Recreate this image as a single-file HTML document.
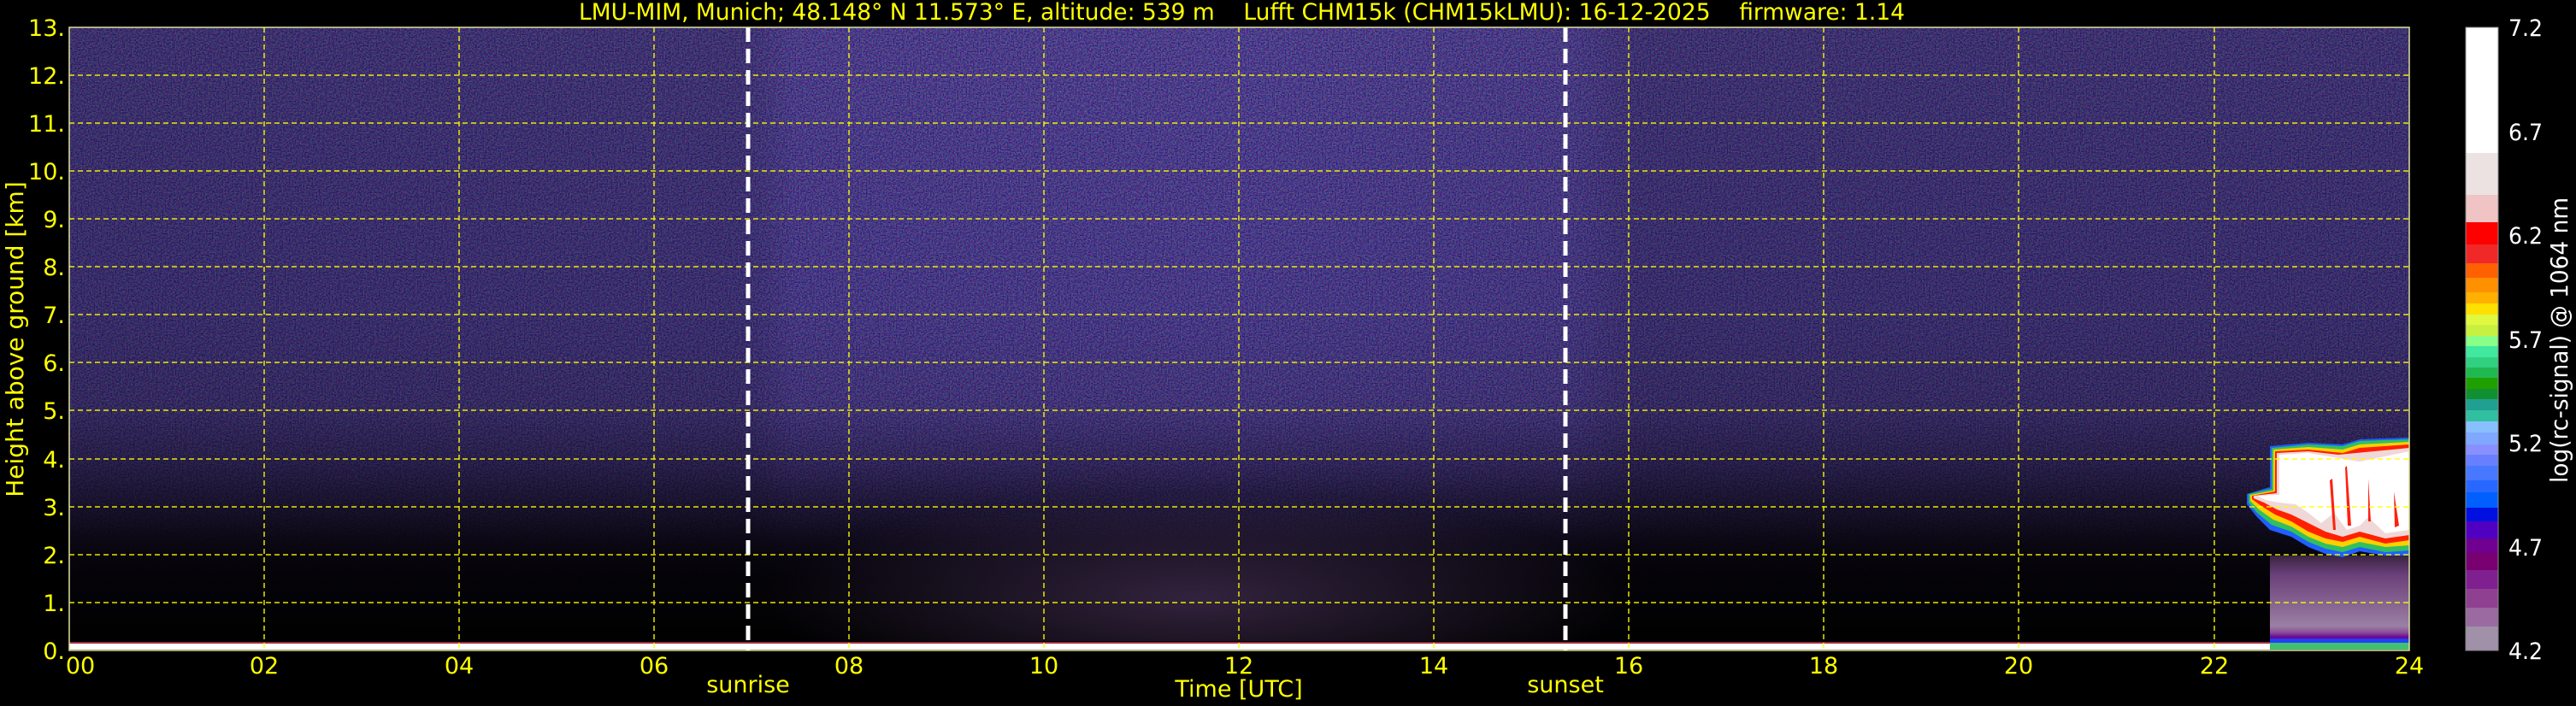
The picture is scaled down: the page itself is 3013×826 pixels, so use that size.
<!DOCTYPE html>
<html><head><meta charset="utf-8"><style>
html,body{margin:0;padding:0;background:#000;width:3013px;height:826px;overflow:hidden}
svg{display:block}
text{font-family:"DejaVu Sans","Liberation Sans",sans-serif}
</style></head><body>
<svg width="3013" height="826" viewBox="0 0 3013 826" xmlns="http://www.w3.org/2000/svg">
<defs>
<linearGradient id="vg" x1="0" y1="32" x2="0" y2="761" gradientUnits="userSpaceOnUse">
<stop offset="0" stop-color="#342a66"/>
<stop offset="0.45" stop-color="#302664"/>
<stop offset="0.62" stop-color="#2a2154"/>
<stop offset="0.70" stop-color="#201840"/>
<stop offset="0.78" stop-color="#120d22"/>
<stop offset="0.85" stop-color="#07050c"/>
<stop offset="1" stop-color="#000"/>
</linearGradient>
<linearGradient id="mg" x1="0" y1="32" x2="0" y2="761" gradientUnits="userSpaceOnUse">
<stop offset="0" stop-color="#fff" stop-opacity="0.3"/>
<stop offset="0.6" stop-color="#fff" stop-opacity="0.25"/>
<stop offset="0.72" stop-color="#fff" stop-opacity="0.14"/>
<stop offset="0.82" stop-color="#fff" stop-opacity="0.03"/>
<stop offset="0.9" stop-color="#fff" stop-opacity="0"/>
</linearGradient>
<mask id="nm"><rect x="81" y="32" width="2737" height="729" fill="url(#mg)"/></mask>
<filter id="noise" x="0" y="0" width="100%" height="100%">
<feTurbulence type="fractalNoise" baseFrequency="0.6" numOctaves="1" seed="3"/>
<feColorMatrix type="matrix" values="2.4 0 0 0 -0.9  0 2.4 0 0 -1.0  0 0 2.6 0 -0.5  0 0 0 0 1"/>
</filter>
<linearGradient id="hg" x1="81" y1="0" x2="2818" y2="0" gradientUnits="userSpaceOnUse">
<stop offset="0" stop-color="#000" stop-opacity="0.22"/>
<stop offset="0.29" stop-color="#000" stop-opacity="0.18"/>
<stop offset="0.31" stop-color="#000" stop-opacity="0.03"/>
<stop offset="0.5" stop-color="#000" stop-opacity="0"/>
<stop offset="0.64" stop-color="#000" stop-opacity="0.06"/>
<stop offset="0.67" stop-color="#000" stop-opacity="0.2"/>
<stop offset="1" stop-color="#000" stop-opacity="0.2"/>
</linearGradient>
<radialGradient id="mid" cx="1400" cy="700" r="500" gradientUnits="userSpaceOnUse" gradientTransform="translate(1400 700) scale(1 0.25) translate(-1400 -700)">
<stop offset="0" stop-color="#6a4a80" stop-opacity="0.45"/>
<stop offset="1" stop-color="#6a4a80" stop-opacity="0"/>
</radialGradient>
<linearGradient id="lowr" x1="0" y1="650" x2="0" y2="760" gradientUnits="userSpaceOnUse">
<stop offset="0" stop-color="#3a2440"/>
<stop offset="0.2" stop-color="#6a3f7a"/>
<stop offset="0.55" stop-color="#8a6894"/>
<stop offset="0.75" stop-color="#9a80a4"/>
<stop offset="0.82" stop-color="#8a4a9a"/>
<stop offset="0.87" stop-color="#6a0090"/>
<stop offset="0.9" stop-color="#2050ff"/>
<stop offset="0.95" stop-color="#30b060"/>
<stop offset="1" stop-color="#90d070"/>
</linearGradient>
</defs>

<rect x="81" y="32" width="2737" height="729" fill="url(#vg)"/>
<rect x="81" y="32" width="2737" height="729" filter="url(#noise)" mask="url(#nm)"/>
<rect x="81" y="32" width="2737" height="729" fill="url(#hg)"/>
<rect x="700" y="580" width="1400" height="170" fill="url(#mid)"/>

<rect x="2655" y="650" width="163" height="108" fill="url(#lowr)"/>
<path d="M2628,578 L2655,570 L2655,522 L2700,518 L2740,520 L2760,514 L2818,512 L2818,650 L2790,650 L2760,645 L2740,652 L2720,648 L2700,640 L2680,628 L2655,620 L2640,605 L2628,590 Z" fill="#2060ff"/>
<path d="M2630,578 L2657,572 L2657,524 L2700,520 L2740,522 L2760,516 L2818,514 L2818,644 L2790,646 L2760,640 L2740,646 L2720,642 L2700,634 L2680,622 L2657,614 L2640,600 L2630,588 Z" fill="#30c060"/>
<path d="M2632,579 L2659,574 L2659,526 L2700,523 L2740,526 L2760,520 L2818,517 L2818,638 L2790,640 L2760,634 L2740,640 L2720,636 L2700,628 L2680,616 L2659,608 L2642,596 L2632,586 Z" fill="#ffd000"/>
<path d="M2634,580 L2661,575 L2661,528 L2700,526 L2740,530 L2760,524 L2818,520 L2818,632 L2790,636 L2760,628 L2740,634 L2720,630 L2700,622 L2680,610 L2661,602 L2645,592 L2634,584 Z" fill="#ff2000"/>
<path d="M2636,580 L2663,577 L2663,530 L2700,528 L2735,532 L2818,524 L2818,626 L2790,630 L2760,622 L2740,628 L2720,622 L2700,612 L2680,602 L2663,596 L2648,588 L2636,583 Z" fill="#f0d8d8"/>
<path d="M2640,580 L2666,579 L2666,532 L2700,530 L2730,535 L2760,540 L2818,528 L2818,620 L2790,624 L2770,605 L2760,615 L2745,620 L2730,600 L2715,612 L2700,600 L2685,590 L2666,588 L2650,585 Z" fill="#ffffff"/>
<path d="M2728,560 l4,60 l-3,0 l-4,-58 Z M2745,545 l5,70 l-4,0 l-3,-68 Z M2770,560 l3,50 l-3,0 Z M2800,575 l6,40 l-5,2 Z" fill="#ff2010"/>

<rect x="81" y="751" width="2574" height="3" fill="#e04060" opacity="0.7"/>
<rect x="81" y="753" width="2574" height="7" fill="#ffffff"/>
<rect x="2655" y="748" width="163" height="4" fill="#2040ff"/>
<rect x="2655" y="752" width="163" height="8" fill="#40c070"/>

<g stroke="#ffff00" stroke-width="1.5" stroke-dasharray="6,4" fill="none" opacity="0.9">
<line x1="81" y1="88" x2="2818" y2="88"/><line x1="81" y1="144" x2="2818" y2="144"/>
<line x1="81" y1="200" x2="2818" y2="200"/><line x1="81" y1="256" x2="2818" y2="256"/>
<line x1="81" y1="312" x2="2818" y2="312"/><line x1="81" y1="368" x2="2818" y2="368"/>
<line x1="81" y1="424" x2="2818" y2="424"/><line x1="81" y1="480" x2="2818" y2="480"/>
<line x1="81" y1="537" x2="2818" y2="537"/><line x1="81" y1="593" x2="2818" y2="593"/>
<line x1="81" y1="649" x2="2818" y2="649"/><line x1="81" y1="705" x2="2818" y2="705"/>
<line x1="309" y1="32" x2="309" y2="761"/><line x1="537" y1="32" x2="537" y2="761"/>
<line x1="765" y1="32" x2="765" y2="761"/><line x1="993" y1="32" x2="993" y2="761"/>
<line x1="1221" y1="32" x2="1221" y2="761"/><line x1="1449" y1="32" x2="1449" y2="761"/>
<line x1="1677" y1="32" x2="1677" y2="761"/><line x1="1905" y1="32" x2="1905" y2="761"/>
<line x1="2133" y1="32" x2="2133" y2="761"/><line x1="2361" y1="32" x2="2361" y2="761"/>
<line x1="2590" y1="32" x2="2590" y2="761"/>
</g>
<g stroke="#ffffff" stroke-width="5" stroke-dasharray="17,8">
<line x1="875" y1="32" x2="875" y2="761"/>
<line x1="1831" y1="32" x2="1831" y2="761"/>
</g>
<rect x="81" y="32" width="2737" height="729" fill="none" stroke="#e0e0a0" stroke-width="1.5"/>

<text x="677" y="23" font-size="27" fill="#ffff00" textLength="1551" lengthAdjust="spacingAndGlyphs" xml:space="preserve">LMU-MIM, Munich; 48.148° N 11.573° E, altitude: 539 m    Lufft CHM15k (CHM15kLMU): 16-12-2025    firmware: 1.14</text>

<g font-size="27" fill="#ffff00" text-anchor="end">
<text x="76" y="42">13.</text><text x="76" y="98">12.</text><text x="76" y="154">11.</text>
<text x="76" y="210">10.</text><text x="76" y="266">9.</text><text x="76" y="322">8.</text>
<text x="76" y="378">7.</text><text x="76" y="434">6.</text><text x="76" y="490">5.</text>
<text x="76" y="547">4.</text><text x="76" y="603">3.</text><text x="76" y="659">2.</text>
<text x="76" y="715">1.</text><text x="76" y="771">0.</text>
</g>
<text transform="translate(27,397) rotate(-90)" font-size="28" fill="#ffff00" text-anchor="middle">Height above ground [km]</text>

<g font-size="27" fill="#ffff00" text-anchor="middle">
<text x="94" y="788">00</text><text x="309" y="788">02</text><text x="537" y="788">04</text>
<text x="765" y="788">06</text><text x="993" y="788">08</text><text x="1221" y="788">10</text>
<text x="1449" y="788">12</text><text x="1677" y="788">14</text><text x="1905" y="788">16</text>
<text x="2133" y="788">18</text><text x="2361" y="788">20</text><text x="2590" y="788">22</text>
<text x="2818" y="788">24</text>
<text x="875" y="810">sunrise</text>
<text x="1831" y="810">sunset</text>
<text x="1449" y="815">Time [UTC]</text>
</g>

<g>
<rect x="2884" y="32" width="38" height="147" fill="#ffffff"/>
<rect x="2884" y="179" width="38" height="49" fill="#ece2e2"/>
<rect x="2884" y="228" width="38" height="32" fill="#f0c4c4"/>
<rect x="2884" y="260" width="38" height="26" fill="#ff0000"/>
<rect x="2884" y="286" width="38" height="22" fill="#f02828"/>
<rect x="2884" y="308" width="38" height="17" fill="#ff6000"/>
<rect x="2884" y="325" width="38" height="17" fill="#ff9000"/>
<rect x="2884" y="342" width="38" height="13" fill="#ffb000"/>
<rect x="2884" y="355" width="38" height="13" fill="#ffe000"/>
<rect x="2884" y="368" width="38" height="12" fill="#e0f840"/>
<rect x="2884" y="380" width="38" height="13" fill="#c8f040"/>
<rect x="2884" y="393" width="38" height="12" fill="#88ff88"/>
<rect x="2884" y="405" width="38" height="13" fill="#40e8a0"/>
<rect x="2884" y="418" width="38" height="12" fill="#30d080"/>
<rect x="2884" y="430" width="38" height="12" fill="#20b850"/>
<rect x="2884" y="442" width="38" height="13" fill="#20a000"/>
<rect x="2884" y="455" width="38" height="12" fill="#109030"/>
<rect x="2884" y="467" width="38" height="13" fill="#20a090"/>
<rect x="2884" y="480" width="38" height="13" fill="#30c0a0"/>
<rect x="2884" y="493" width="38" height="13" fill="#88c0ff"/>
<rect x="2884" y="506" width="38" height="14" fill="#80a8ff"/>
<rect x="2884" y="520" width="38" height="12" fill="#8890ff"/>
<rect x="2884" y="532" width="38" height="13" fill="#6880ff"/>
<rect x="2884" y="545" width="38" height="17" fill="#4878ff"/>
<rect x="2884" y="562" width="38" height="14" fill="#2868ff"/>
<rect x="2884" y="576" width="38" height="18" fill="#0060ff"/>
<rect x="2884" y="594" width="38" height="16" fill="#0010e0"/>
<rect x="2884" y="610" width="38" height="20" fill="#5000c0"/>
<rect x="2884" y="630" width="38" height="17" fill="#700090"/>
<rect x="2884" y="647" width="38" height="20" fill="#780070"/>
<rect x="2884" y="667" width="38" height="22" fill="#802090"/>
<rect x="2884" y="689" width="38" height="22" fill="#904090"/>
<rect x="2884" y="711" width="38" height="22" fill="#9a6aa0"/>
<rect x="2884" y="733" width="38" height="28" fill="#a090a8"/>
<rect x="2884" y="32" width="38" height="729" fill="none" stroke="#888" stroke-width="1"/>
</g>
<g font-size="27" fill="#ffffff">
<text x="2934" y="42" textLength="40" lengthAdjust="spacingAndGlyphs">7.2</text>
<text x="2934" y="164" textLength="40" lengthAdjust="spacingAndGlyphs">6.7</text>
<text x="2934" y="285" textLength="40" lengthAdjust="spacingAndGlyphs">6.2</text>
<text x="2934" y="407" textLength="40" lengthAdjust="spacingAndGlyphs">5.7</text>
<text x="2934" y="528" textLength="40" lengthAdjust="spacingAndGlyphs">5.2</text>
<text x="2934" y="650" textLength="40" lengthAdjust="spacingAndGlyphs">4.7</text>
<text x="2934" y="771" textLength="40" lengthAdjust="spacingAndGlyphs">4.2</text>
</g>
<text transform="translate(3003,398) rotate(-90)" font-size="28" fill="#ffffff" text-anchor="middle" textLength="334" lengthAdjust="spacingAndGlyphs">log(rc-signal) @ 1064 nm</text>
</svg>
</body></html>
